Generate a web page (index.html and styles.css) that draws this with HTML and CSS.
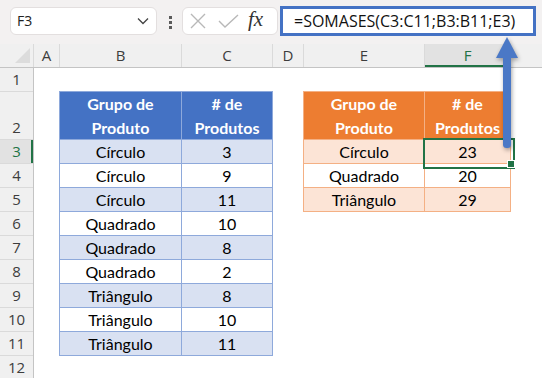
FILE: index.html
```html
<!DOCTYPE html>
<html lang="pt">
<head>
<meta charset="utf-8">
<link rel="stylesheet" href="styles.css">
</head>
<body>
<div class="app">
  <div class="toolbar">
    <div class="namebox">
      <span class="ref">F3</span>
      <svg class="chev" width="12" height="8" viewBox="0 0 12 8"><path d="M1 1.5 L6 6.5 L11 1.5" fill="none" stroke="#444" stroke-width="1.3"/></svg>
    </div>
    <div class="dots"><i></i><i></i><i></i></div>
    <div class="fxbtns">
      <svg class="x-ic" width="16" height="16" viewBox="0 0 16 16"><path d="M1 1 L15 15 M15 1 L1 15" stroke="#b8b8b8" stroke-width="1.4" fill="none"/></svg>
      <svg class="ok-ic" width="21" height="14" viewBox="0 0 21 14"><path d="M1 7 L7 13 L20 1" stroke="#b8b8b8" stroke-width="1.4" fill="none"/></svg>
      <span class="fx">fx</span>
    </div>
    <div class="formula">=SOMASES(C3:C11;B3:B11;E3)</div>
  </div>

  <div class="colheads">
    <div class="corner"><svg width="34" height="23" viewBox="0 0 34 23"><polygon points="30,4 30,19 15,19" fill="#dcdcdc"/></svg></div>
    <div class="ch w-a">A</div>
    <div class="ch w-b">B</div>
    <div class="ch w-c">C</div>
    <div class="ch w-d">D</div>
    <div class="ch w-e">E</div>
    <div class="ch w-f sel">F</div>
    <div class="ch rest"></div>
  </div>

  <div class="sheet">
    <div class="rowheads">
      <div class="rh">1</div>
      <div class="rh tall">2</div>
      <div class="rh sel">3</div>
      <div class="rh">4</div>
      <div class="rh">5</div>
      <div class="rh">6</div>
      <div class="rh">7</div>
      <div class="rh">8</div>
      <div class="rh">9</div>
      <div class="rh">10</div>
      <div class="rh">11</div>
      <div class="rh">12</div>
    </div>
    <div class="cells">
      <div class="tbl blue">
        <div class="c hd cb">Grupo de<br>Produto</div>
        <div class="c hd cc">#  de<br>Produtos</div>
        <div class="c band cb">Círculo</div><div class="c band cc">3</div>
        <div class="c cb">Círculo</div><div class="c cc">9</div>
        <div class="c band cb">Círculo</div><div class="c band cc">11</div>
        <div class="c cb">Quadrado</div><div class="c cc">10</div>
        <div class="c band cb">Quadrado</div><div class="c band cc">8</div>
        <div class="c cb">Quadrado</div><div class="c cc">2</div>
        <div class="c band cb">Triângulo</div><div class="c band cc">8</div>
        <div class="c cb">Triângulo</div><div class="c cc">10</div>
        <div class="c band cb">Triângulo</div><div class="c band cc">11</div>
      </div>
      <div class="tbl orange">
        <div class="c hd ce">Grupo de<br>Produto</div>
        <div class="c hd cf">#  de<br>Produtos</div>
        <div class="c band ce">Círculo</div><div class="c band cf active">23</div>
        <div class="c ce">Quadrado</div><div class="c cf">20</div>
        <div class="c band ce">Triângulo</div><div class="c band cf">29</div>
      </div>
    </div>
  </div>

  <svg class="arrow" width="542" height="378" viewBox="0 0 542 378">
    <g class="arrow-g">
      <rect x="503" y="54" width="8" height="94" rx="3.5" fill="#4a78c6"/>
      <polygon points="507,37 518,58 496,58" fill="#4a78c6"/>
    </g>
  </svg>
</div>
</body>
</html>
```

FILE: styles.css
```css
* { box-sizing: border-box; margin: 0; padding: 0; }
html, body { width: 542px; height: 378px; overflow: hidden; background: #fff; }
body { font-family: "Open Sans", "Liberation Sans", sans-serif; }

.app { position: relative; width: 542px; height: 378px; overflow: hidden; }

/* toolbar */
.toolbar {
  height: 44px;
  background: #f3f1f1;
  display: flex;
  align-items: flex-start;
  padding: 6px 0 0 10px;
}
.namebox {
  margin-top: 1px;
  width: 147px;
  height: 28px;
  background: #fff;
  border: 1px solid #e3dfdf;
  border-radius: 6px;
  display: flex;
  align-items: center;
  justify-content: space-between;
  padding: 0 7px 0 6px;
}
.ref { font-size: 14px; color: #222; line-height: 1; }
.chev { display: block; }
.dots {
  margin: 10px 0 0 12px;
  width: 4px;
  display: flex;
  flex-direction: column;
  gap: 2px;
}
.dots i { display: block; width: 3px; height: 3px; background: #5a5a5a; }
.fxbtns {
  margin: 1px 0 0 9px;
  width: 96px;
  height: 28px;
  background: #fff;
  border: 1px solid #e3dfdf;
  border-radius: 6px;
  display: flex;
  align-items: center;
  padding-left: 7px;
}
.ok-ic { margin-left: 12px; }
.fx {
  margin-left: 9px;
  font-family: "Liberation Serif", "DejaVu Serif", serif;
  font-style: italic;
  font-size: 21px;
  color: #333;
  line-height: 1;
  margin-top: -3px;
}
.formula {
  margin-left: 2px;
  width: 256px;
  height: 30px;
  border: 3px solid #4472c4;
  background: #fff;
  font-size: 16px;
  line-height: 24px;
  color: #111;
  padding-left: 11px;
  white-space: nowrap;
}

/* column headers */
.colheads {
  display: flex;
  height: 24px;
  background: #f0f0f0;
  border-bottom: 1px solid #c4c4c4;
}
.corner { width: 34px; border-right: 1px solid #dadada; }
.corner svg { display: block; }
.ch {
  border-right: 1px solid #dadada;
  text-align: center;
  font-size: 15px;
  line-height: 23px;
  color: #3d3d3d;
}
.w-a { width: 26px; }
.w-b { width: 122px; }
.w-c { width: 91px; }
.w-d { width: 31px; }
.w-e { width: 121px; }
.w-f { width: 86px; }
.ch.rest { flex: 1; border-right: 0; }
.ch.sel {
  background: #e2e2e2;
  color: #217346;
  border-bottom: 2px solid #217346;
  line-height: 22px;
  height: 23px;
}

/* sheet */
.sheet { display: flex; }
.rowheads {
  width: 34px;
  background: #f0f0f0;
  border-right: 1px solid #c4c4c4;
}
.rh {
  height: 24px;
  border-bottom: 1px solid #dadada;
  text-align: center;
  font-size: 15px;
  line-height: 23px;
  color: #3d3d3d;
  display: flex;
  align-items: flex-end;
  justify-content: center;
}
.rh.tall { height: 48px; padding-bottom: 0; }
.rh.sel {
  background: #e2e2e2;
  color: #217346;
  box-shadow: inset -2px 0 0 #217346;
}

.cells {
  display: flex;
  align-items: flex-start;
  padding: 23px 0 0 25px;
  gap: 30px;
}
.tbl {
  display: grid;
  border-left: 1px solid;
  border-top: 1px solid;
  font-family: Lato, "Open Sans", sans-serif;
  font-size: 16px;
}
.tbl.blue { grid-template-columns: 122px 91px; border-color: #8ea9db; }
.tbl.orange { grid-template-columns: 121px 86px; border-color: #f4b084; }

.c {
  height: 24px;
  line-height: 23px;
  text-align: center;
  color: #000;
  border-right: 1px solid;
  border-bottom: 1px solid;
  white-space: nowrap;
}
.blue .c { border-color: #8ea9db; background: #fff; }
.orange .c { border-color: #f4b084; background: #fff; }
.blue .c.band { background: #d9e1f2; }
.orange .c.band { background: #fce4d6; }
.c.hd {
  height: 48px;
  line-height: 24px;
  font-weight: 700;
  color: #fff;
}
.blue .c.hd { background: #4472c4; }
.orange .c.hd { background: #ed7d31; }

.c.active { position: relative; }
.c.active::before {
  content: "";
  position: absolute;
  left: -2px;
  top: -2px;
  width: 88px;
  height: 27px;
  border: 2px solid #217346;
}
.c.active::after {
  content: "";
  position: absolute;
  left: 82px;
  top: 20px;
  width: 6px;
  height: 6px;
  background: #217346;
  border: 1px solid #fff;
}

.arrow { position: absolute; left: 0; top: 0; pointer-events: none; }
.arrow-g { filter: drop-shadow(1px 2px 2px rgba(0,0,0,0.35)); }
```
